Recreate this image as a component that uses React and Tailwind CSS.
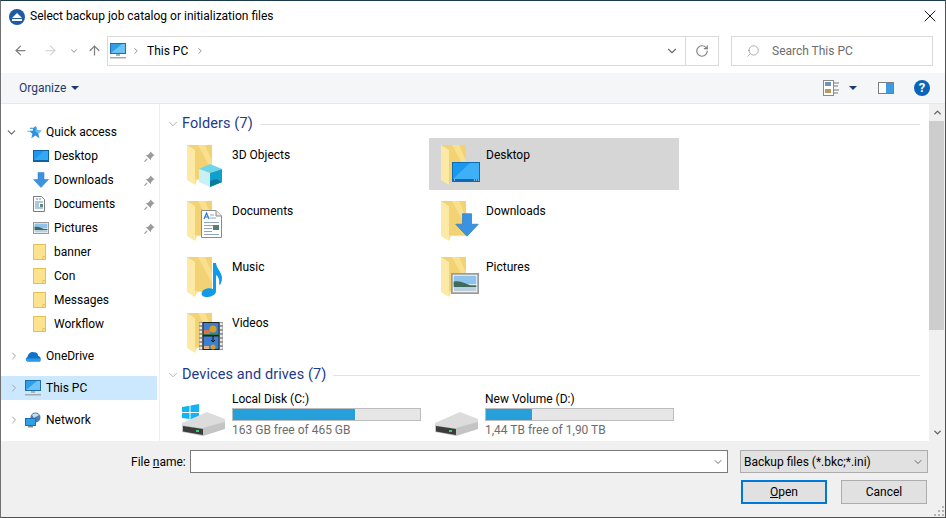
import { ArrowLeft, ArrowRight, ArrowUp, ChevronDown, ChevronRight, RotateCw, Search, X } from 'lucide-react'

function PcIcon({ className }) {
  return (
    <svg viewBox="0 0 16 16" className={className}>
      <rect x="0.5" y="0.5" width="15" height="10" fill="#2f9fe8" stroke="#1b6fb0" />
      <path d="M1 10 L12 1 H15 V10 Z" fill="#6cc3f5" />
      <rect x="6" y="11" width="4" height="2" fill="#9fb4c4" />
      <rect x="0" y="14" width="16" height="1.5" fill="#a9a9a9" />
    </svg>
  )
}

function QuickStar() {
  return (
    <svg viewBox="0 0 16 16" className="w-[15px] h-[15px]">
      <path d="M9.5 1 L11 5.6 L15.5 6 L12 9 L13.2 14 L9 11.2 L4.6 14 L5.8 9.2 L3 7 H0.5 V6 H6 L6.6 4 H3 V3 H7 Z" fill="#2f8fe0" />
      <path d="M9.5 1 L11 5.6 L15.5 6 L12 9 L9 7 Z" fill="#66bdf2" />
    </svg>
  )
}

function DesktopSmall() {
  return (
    <svg viewBox="0 0 16 12" className="w-[16px] h-[12px]">
      <rect x="0.5" y="0.5" width="15" height="11" fill="#1e97f0" stroke="#0f62a8" />
      <path d="M1 10 L11 1 H15 V10 Z" fill="#36a9f5" />
      <rect x="1" y="10" width="14" height="1" fill="#0f62a8" />
    </svg>
  )
}

function DesktopBig() {
  return (
    <svg viewBox="0 0 28 20" className="absolute left-[11px] top-[17px] w-[28px] h-[20px]">
      <rect x="0.5" y="0.5" width="27" height="19" fill="#1b98f0" stroke="#0f6ab4" />
      <path d="M1 17 L18 1 H27 V17 Z" fill="#3db0f7" />
      <rect x="1" y="17" width="26" height="2" fill="#0f6ab4" />
      <path d="M2 18 H3 M22 18 H23 M24 18 H25 M26 18 H27" stroke="#fff" />
    </svg>
  )
}

function DownArrow({ className }) {
  return (
    <svg viewBox="0 0 16 16" className={className}>
      <path d="M5 0.5 H11 V7.5 H15.5 L8 15.5 L0.5 7.5 H5 Z" fill="#3a92e0" stroke="#2f7fc6" strokeWidth="0.5" />
    </svg>
  )
}

function DocSmall() {
  return (
    <svg viewBox="0 0 12 16" className="w-[12px] h-[16px]">
      <path d="M0.5 0.5 H8.5 L11.5 3.5 V15.5 H0.5 Z" fill="#fff" stroke="#7d7d7d" />
      <path d="M3 3 H5 M6 3 H8 M2 6 H10 M2 8 H6 M2 10 H6 M2 12 H10" stroke="#5f8fb8" />
      <rect x="7" y="8" width="3" height="3" fill="#5f8a80" />
    </svg>
  )
}

function PicSmall({ className = 'w-[16px] h-[12px]' }) {
  return (
    <svg viewBox="0 0 16 12" className={className}>
      <rect x="0.5" y="0.5" width="15" height="11" fill="#fff" stroke="#9a9a9a" />
      <rect x="1.5" y="1.5" width="13" height="5" fill="#8fc3ec" />
      <path d="M1.5 5 C5 4 8 6 11 7 H14.5 V8 H1.5 Z" fill="#3f6b5c" />
      <rect x="1.5" y="8" width="13" height="2.5" fill="#b9cfdc" />
    </svg>
  )
}

function FolderSmall() {
  return (
    <svg viewBox="0 0 13 16" className="w-[13px] h-[16px]">
      <rect x="0.5" y="0.5" width="12" height="15" fill="#fde28f" stroke="#e6c14f" />
      <path d="M10 15 V12.5 H12.5" fill="none" stroke="#e6c14f" />
    </svg>
  )
}

function Pin() {
  return (
    <svg viewBox="0 0 12 12" className="w-[11px] h-[11px]">
      <path d="M7 0.5 L11.5 5 L10 5.5 L8 7.5 L7.5 10 L2 4.5 L4.5 4 L6.5 2 Z" fill="#9b9b9b" />
      <path d="M3.5 8.5 L0.5 11.5" stroke="#9b9b9b" strokeWidth="1.2" />
    </svg>
  )
}

function OneDrive() {
  return (
    <svg viewBox="0 0 16 11" className="w-[16px] h-[11px]">
      <path d="M3 10.5 C0.5 10.5 0 7 2.5 6 C3 3 6 0 9 1.5 C11 0.5 13.5 3 13 5 C15.5 5 16.5 8 15 10.5 Z" fill="#1170c8" />
      <path d="M3 10.5 C1.5 10.5 0.5 9 1 7.5 H14 C15.5 7.5 16 9.5 15 10.5 Z" fill="#2b9be8" />
    </svg>
  )
}

function NetworkIcon() {
  return (
    <svg viewBox="0 0 16 16" className="w-[16px] h-[16px]">
      <circle cx="10.5" cy="5.5" r="5" fill="#4f7fb0" />
      <path d="M7 3 C9 1 12 1 14 3 C12 5 11 4 9 6 Z" fill="#c9dcec" />
      <rect x="0.5" y="6.5" width="10" height="7" fill="#2f9fe8" stroke="#1b6fb0" />
      <rect x="3" y="14" width="5" height="1.5" fill="#8a8a8a" />
    </svg>
  )
}

function BigFolder({ children }) {
  return (
    <div className="relative w-[40px] h-[44px] shrink-0">
      <svg viewBox="0 0 40 44" className="w-[40px] h-[44px]">
        <rect x="0" y="0" width="25" height="34" fill="#f2d272" />
        <path d="M11 0 H18 L25 16 V26 Z" fill="#f8e08f" />
        <path d="M0 0 L8 5 V34 L8 40 L0 35 Z" fill="#fde9a6" />
        <path d="M0 35 L8 40 V34 H25 V35 H10 L8 40 Z" fill="#e9c968" opacity="0.6" />
      </svg>
      {children}
    </div>
  )
}

function Cube() {
  return (
    <svg viewBox="0 0 25 25" className="absolute left-[11px] top-[18px] w-[25px] h-[25px]">
      <path d="M1 6 L12 1 L24 6 L12 10 Z" fill="#6fd6ea" />
      <path d="M1 6 L12 10 V24 L1 19 Z" fill="#c9f0f5" />
      <path d="M12 10 L24 6 V19 L12 24 Z" fill="#11a0cc" />
      <path d="M12 24 L12 18 L18 16 L24 19 Z" fill="#0b7a9f" />
    </svg>
  )
}

function DocBig() {
  return (
    <svg viewBox="0 0 21 28" className="absolute left-[14px] top-[9px] w-[21px] h-[28px]">
      <path d="M0.5 0.5 H15 L20.5 6 V27.5 H0.5 Z" fill="#fff" stroke="#8a8a8a" />
      <path d="M15 0.5 V6 H20.5" fill="#e8e8e8" stroke="#8a8a8a" />
      <path d="M3 12.5 H18 M3 15.5 H18 M3 18.5 H11 M3 21.5 H11 M3 24.5 H18" stroke="#8fa6bb" />
      <path d="M3 9 L5.5 3 L8 9 M4 7 H7" fill="none" stroke="#2878d0" strokeWidth="1.2" />
      <path d="M9 5 H13 M9 8 H15" stroke="#8fa6bb" />
      <rect x="12" y="15" width="6" height="5" fill="#55807a" />
    </svg>
  )
}

function Note() {
  return (
    <svg viewBox="0 0 22 34" className="absolute left-[14px] top-[6px] w-[22px] h-[34px]">
      <path d="M12 0 H15 C15.5 6 21 9 21 15 C21 18 20 20 19 22 L18 21 C19 17 17 13 15 12 V28 C15 32 10 34 5 34 C1 34 0 31 1 29 C2 26 8 24 12 26 Z" fill="#0f9be8" />
    </svg>
  )
}

function Film() {
  return (
    <svg viewBox="0 0 24 28" className="absolute left-[12px] top-[9px] w-[24px] h-[28px]">
      <rect x="0" y="0" width="24" height="28" fill="#9a9a9a" />
      <rect x="4" y="0.5" width="16" height="27" fill="#3a7fd0" stroke="#222" />
      <path d="M0.5 2 H3 M0.5 6 H3 M0.5 10 H3 M0.5 14 H3 M0.5 18 H3 M0.5 22 H3 M0.5 26 H3 M21 2 H23.5 M21 6 H23.5 M21 10 H23.5 M21 14 H23.5 M21 18 H23.5 M21 22 H23.5 M21 26 H23.5" stroke="#e8e8e8" strokeWidth="2" />
      <rect x="4" y="13" width="16" height="1.5" fill="#222" />
      <circle cx="14" cy="7" r="3.5" fill="#d8a020" />
      <rect x="5" y="8" width="6" height="4" fill="#d9705a" />
      <path d="M4.5 12 H19.5 V13 H4.5 Z" fill="#2f7a3a" />
      <path d="M14 14 V20 M12 18 L14 20 L16 18" stroke="#111" fill="none" />
      <circle cx="14" cy="25" r="2.5" fill="#d8a020" />
      <rect x="5" y="24" width="5" height="3" fill="#e0b080" />
    </svg>
  )
}

function Drive() {
  return (
    <svg viewBox="0 0 44 24" className="absolute left-0 bottom-[4px] w-[44px] h-[24px]">
      <path d="M0 11 L25 0 L43 7 V11 L20 16 L0 13 Z" fill="#dcdcdc" />
      <path d="M0 13 L20 16 L43 10 V17 L21 24 L0 20 Z" fill="#c4c4c4" />
      <path d="M1 14 L21 17 V23 L1 19.5 Z" fill="#3c3c3c" />
      <rect x="14" y="18" width="3" height="2" fill="#33d66a" />
    </svg>
  )
}

function WinLogo() {
  return (
    <svg viewBox="0 0 17 17" className="absolute left-0 top-[11px] w-[17px] h-[17px]">
      <path d="M0 3 L7.5 1.8 V8 H0 Z M8.5 1.6 L17 0 V8 H8.5 Z M0 9 H7.5 V15 L0 14 Z M8.5 9 H17 V17 L8.5 15.4 Z" fill="#12b4f4" />
    </svg>
  )
}

const navTop = [
  { label: 'Desktop', icon: <DesktopSmall />, pin: true },
  { label: 'Downloads', icon: <DownArrow className="w-[16px] h-[16px]" />, pin: true },
  { label: 'Documents', icon: <DocSmall />, pin: true },
  { label: 'Pictures', icon: <PicSmall />, pin: true },
  { label: 'banner', icon: <FolderSmall /> },
  { label: 'Con', icon: <FolderSmall /> },
  { label: 'Messages', icon: <FolderSmall /> },
  { label: 'Workflow', icon: <FolderSmall /> },
]

const folders = [
  { label: '3D Objects', badge: <Cube /> },
  { label: 'Desktop', selected: true, badge: <DesktopBig /> },
  { label: 'Documents', badge: <DocBig /> },
  {
    label: 'Downloads',
    badge: (
      <div className="absolute left-[14px] top-[12px]">
        <DownArrow className="w-[24px] h-[24px]" />
      </div>
    ),
  },
  { label: 'Music', badge: <Note /> },
  {
    label: 'Pictures',
    badge: (
      <div className="absolute left-[10px] top-[16px] flex">
        <PicSmall className="w-[28px] h-[21px]" />
      </div>
    ),
  },
  { label: 'Videos', badge: <Film /> },
]

const drives = [
  { name: 'Local Disk (C:)', free: '163 GB free of 465 GB', used: '65%', win: true },
  { name: 'New Volume (D:)', free: '1,44 TB free of 1,90 TB', used: '24.5%' },
]

function NavRow({ item }) {
  return (
    <div className="h-[24px] flex items-center pl-[32px] pr-[4px]">
      <span className="w-[21px] flex justify-start">{item.icon}</span>
      <span className="flex-1">{item.label}</span>
      {item.pin && <Pin />}
    </div>
  )
}

function RootRow({ label, icon, selected, top }) {
  return (
    <div className={`h-[24px] flex items-center pl-[7px] w-[156px] ${top} ${selected ? 'bg-[#cce8ff]' : ''}`}>
      <ChevronRight size={12} strokeWidth={2} className="text-[#a6a6a6] mr-[5px]" />
      <span className="w-[21px] flex">{icon}</span>
      <span>{label}</span>
    </div>
  )
}

function SectionHead({ title, className }) {
  return (
    <div className={`flex items-center h-[20px] ${className}`}>
      <ChevronDown size={14} strokeWidth={1} className="text-[#777] mr-[2px]" />
      <span className="text-[14.5px] tracking-[0.1px] text-[#1e3a8a] mr-[7px] whitespace-nowrap">{title}</span>
      <div className="flex-1 h-px bg-[#e2e2e2]" />
    </div>
  )
}

export default function App() {
  return (
    <div className="w-[946px] h-[518px] flex flex-col overflow-hidden bg-white border-l border-r border-b border-t border-l-[#707070] border-r-[#505050] border-b-[#505050] border-t-[#1b3a4b] text-[12px] text-black font-['Roboto','Liberation_Sans',sans-serif]">
      <div className="h-[31px] flex items-center pl-[8px] pr-[5px] shrink-0">
        <div className="w-[16px] h-[16px] rounded-full bg-[#1f5aa6] flex flex-col items-center justify-center mr-[5px]">
          <div className="w-0 h-0 border-l-[5px] border-r-[5px] border-b-[5px] border-l-transparent border-r-transparent border-b-white" />
          <div className="w-[10px] h-[2px] bg-white mt-[1px]" />
        </div>
        <span className="flex-1 -mt-[1px]">Select backup job catalog or initialization files</span>
        <X size={20} strokeWidth={1.1} className="-mt-[2px]" />
      </div>

      <div className="h-[41px] flex items-center shrink-0 pb-[4px]">
        <ArrowLeft size={15} strokeWidth={2} className="text-[#7f7f7f] ml-[12px]" />
        <ArrowRight size={15} strokeWidth={2} className="text-[#d5d5d5] ml-[15px]" />
        <ChevronDown size={10} strokeWidth={2.5} className="text-[#a0a0a0] ml-[11px]" />
        <ArrowUp size={15} strokeWidth={2} className="text-[#7f7f7f] ml-[8px]" />
        <div className="ml-[5px] w-[612px] h-[30px] border border-[#d9d9d9] flex items-center">
          <PcIcon className="w-[16px] h-[16px] ml-[2px]" />
          <ChevronRight size={10} strokeWidth={2} className="text-[#808080] ml-[5px]" />
          <span className="ml-[6px]">This PC</span>
          <ChevronRight size={10} strokeWidth={2} className="text-[#808080] ml-[7px]" />
          <div className="flex-1" />
          <ChevronDown size={14} strokeWidth={2} className="text-[#707070] mr-[6px]" />
          <div className="w-[33px] h-full border-l border-[#d9d9d9] flex items-center justify-center">
            <RotateCw size={14} strokeWidth={2} className="text-[#7f7f7f]" />
          </div>
        </div>
        <div className="ml-[12px] w-[202px] h-[30px] border border-[#d9d9d9] flex items-center text-[#6d6d6d]">
          <Search size={14} strokeWidth={1} className="ml-[14px] -scale-x-100 text-[#777]" />
          <span className="ml-[12px]">Search This PC</span>
        </div>
      </div>

      <div className="h-[31px] bg-[#f5f6f7] border-b border-[#e8e8e8] flex items-center shrink-0">
        <span className="ml-[18px] text-[#1e3a6e]">Organize</span>
        <div className="ml-[5px] w-0 h-0 border-l-[4px] border-r-[4px] border-t-[4px] border-l-transparent border-r-transparent border-t-[#1e3a6e]" />
        <div className="flex-1" />
        <svg viewBox="0 0 16 16" className="w-[16px] h-[16px]">
          <rect x="0.5" y="0.5" width="10" height="15" fill="#fff" stroke="#8a8a8a" />
          <rect x="2" y="2" width="6" height="4" fill="#6f93b5" />
          <rect x="2" y="9" width="6" height="4" fill="#b89a5a" />
          <path d="M11 3 H16 M11 6 H15 M11 10 H16 M11 13 H15" stroke="#777" />
        </svg>
        <div className="ml-[10px] w-0 h-0 border-l-[4px] border-r-[4px] border-t-[4px] border-l-transparent border-r-transparent border-t-[#1e3a6e]" />
        <div className="ml-[21px] w-[16px] h-[12px] border border-[#7d7d7d] flex justify-end bg-white">
          <div className="w-[7px] bg-[#3d9be0]" />
        </div>
        <div className="ml-[20px] mr-[15px] w-[16px] h-[16px] rounded-full bg-[#0a64b8] text-white text-[13px] font-bold flex items-center justify-center">
          ?
        </div>
      </div>

      <div className="h-[337px] flex shrink-0 overflow-hidden">
        <div className="w-[158px] shrink-0 border-r border-[#f0f0f0] pt-[16px] box-content">
          <div className="h-[24px] flex items-center pl-[4px]">
            <ChevronDown size={13} strokeWidth={2} className="text-[#666] mr-[9px]" />
            <span className="w-[19px] flex"><QuickStar /></span>
            <span>Quick access</span>
          </div>
          {navTop.map(item => <NavRow key={item.label} item={item} />)}
          <RootRow label="OneDrive" icon={<OneDrive />} top="mt-[8px]" />
          <RootRow label="This PC" icon={<PcIcon className="w-[16px] h-[16px]" />} selected top="mt-[8px]" />
          <RootRow label="Network" icon={<NetworkIcon />} top="mt-[8px]" />
        </div>

        <div className="flex-1 min-w-0 pl-[6px] pr-[9px] pt-[10px]">
          <SectionHead title="Folders (7)" />
          <div className="grid grid-cols-[254px_254px] ml-[9px] mt-[4px] auto-rows-[56px]">
            {folders.map(f => (
              <div key={f.label} className={`w-[250px] pl-[12px] h-[52px] flex ${f.selected ? 'bg-[#d6d6d6]' : ''}`}>
                <div className="pt-[7px]">
                  <BigFolder>{f.badge}</BigFolder>
                </div>
                <span className="ml-[5px] mt-[8px]">{f.label}</span>
              </div>
            ))}
          </div>
          <SectionHead title="Devices and drives (7)" className="mt-[3px]" />
          <div className="flex ml-[14px] mt-[5px]">
            {drives.map(d => (
              <div key={d.name} className="w-[253px] h-[50px] flex pl-[2px]">
                <div className="relative w-[44px] h-[47px] shrink-0 mt-[3px]">
                  {d.win && <WinLogo />}
                  <Drive />
                </div>
                <div className="ml-[6px] w-[189px] pt-[2px]">
                  <div className="leading-[15px]">{d.name}</div>
                  <div className="h-[13px] mt-[1px] bg-[#e6e6e6] border border-[#bcbcbc]">
                    <div className="h-full bg-[#26a0da]" style={{ width: d.used }} />
                  </div>
                  <div className="leading-[15px] mt-[2px] text-[#6d6d6d]">{d.free}</div>
                </div>
              </div>
            ))}
          </div>
        </div>

        <div className="w-[16px] shrink-0 bg-[#f0f0f0] flex flex-col">
          <div className="h-[17px] flex items-center justify-center">
            <ChevronDown size={11} strokeWidth={3} className="text-[#606060] rotate-180" />
          </div>
          <div className="h-[209px] w-[15px] bg-[#cdcdcd]" />
          <div className="flex-1" />
          <div className="h-[17px] flex items-center justify-center">
            <ChevronDown size={11} strokeWidth={3} className="text-[#606060]" />
          </div>
        </div>
      </div>

      <div className="relative flex-1 bg-[#f0f0f0] pt-[9px] pl-[130px]">
        <div className="flex items-center h-[23px]">
          <span className="w-[59px]">File <span className="underline">n</span>ame:</span>
          <div className="w-[538px] h-[23px] bg-white border border-[#7a7a7a] flex items-center justify-end pr-[3px]">
            <ChevronDown size={12} strokeWidth={1.5} className="text-[#404040]" />
          </div>
          <div className="ml-[12px] w-[188px] h-[23px] bg-[#e1e1e1] border border-[#adadad] flex items-center justify-between pl-[3px] pr-[3px]">
            <span>Backup files (*.bkc;*.ini)</span>
            <ChevronDown size={12} strokeWidth={1.5} className="text-[#404040]" />
          </div>
        </div>
        <div className="flex justify-end gap-[14px] mt-[7px] pr-[18px]">
          <div className="w-[86px] h-[24px] bg-[#e1e1e1] border-2 border-[#0078d7] flex items-center justify-center">
            <span><span className="underline">O</span>pen</span>
          </div>
          <div className="w-[86px] h-[24px] bg-[#e1e1e1] border border-[#adadad] flex items-center justify-center">
            Cancel
          </div>
        </div>
        <svg viewBox="0 0 10 10" className="absolute right-[1px] bottom-[1px] w-[10px] h-[10px]">
          <path d="M8 0 h2 v2 h-2 Z M4 4 h2 v2 h-2 Z M8 4 h2 v2 h-2 Z M0 8 h2 v2 h-2 Z M4 8 h2 v2 h-2 Z M8 8 h2 v2 h-2 Z" fill="#b5b5b5" />
        </svg>
      </div>
    </div>
  )
}
